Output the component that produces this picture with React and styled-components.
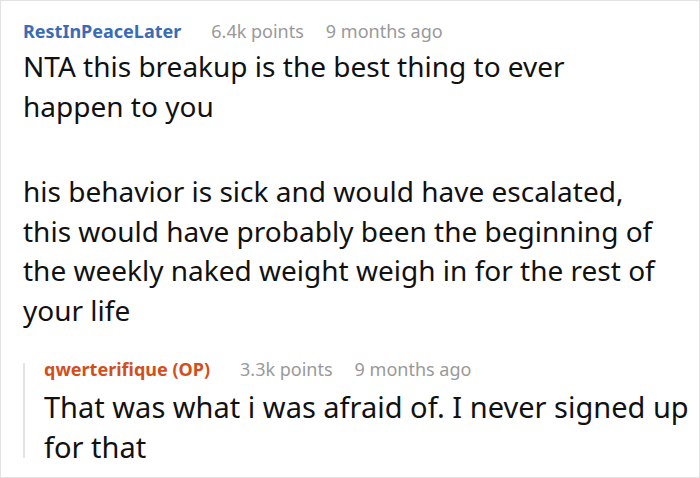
import React from 'react';
import styled, { createGlobalStyle } from 'styled-components';

const GlobalStyle = createGlobalStyle`
  html, body {
    margin: 0;
    padding: 0;
    background: #fff;
  }
  body {
    font-family: "Noto Sans", "Open Sans", sans-serif;
  }
`;

const Frame = styled.div`
  box-sizing: border-box;
  width: 700px;
  height: 478px;
  border: 1px solid #e2e2e2;
  padding: 15px 40px 0 22px;
  overflow: hidden;
`;

const Comment = styled.div`
  display: flex;
  flex-direction: column;
`;

const Meta = styled.div`
  display: flex;
  align-items: baseline;
  font-size: 18px;
  line-height: 30px;
  color: #999;
`;

const Author = styled.span`
  font-weight: 700;
  color: ${props => props.color};
  margin-right: 30px;
`;

const Points = styled.span`
  margin-right: 22px;
`;

const Body = styled.div`
  font-size: ${props => (props.reply ? '29px' : '28px')};
  line-height: 39.5px;
  color: #111;
  margin-top: ${props => (props.reply ? '3px' : '1px')};
`;

const Para = styled.p`
  margin: 0 0 ${props => (props.last ? '0' : '46px')};
`;

const Reply = styled.div`
  position: relative;
  margin: 24px -36px 0 0;
  padding-left: 21px;

  &::before {
    content: '';
    position: absolute;
    left: 0;
    top: 9px;
    bottom: 8px;
    width: 2px;
    background: #e4e4e4;
  }
`;

const App = () => {
  return (
    <>
      <GlobalStyle />
      <Frame>
        <Comment>
          <Meta>
            <Author color="#3a6cb6">RestInPeaceLater</Author>
            <Points>6.4k points</Points>
            <span>9 months ago</span>
          </Meta>
          <Body>
            <Para>NTA this breakup is the best thing to ever happen to you</Para>
            <Para last>
              his behavior is sick and would have escalated, this would have probably been
              the beginning of the weekly naked weight weigh in for the rest of your life
            </Para>
          </Body>
          <Reply>
            <Meta>
              <Author color="#d24f1c">qwerterifique (OP)</Author>
              <Points>3.3k points</Points>
              <span>9 months ago</span>
            </Meta>
            <Body reply>
              <Para last>That was what i was afraid of. I never signed up for that</Para>
            </Body>
          </Reply>
        </Comment>
      </Frame>
    </>
  );
};

export default App;
